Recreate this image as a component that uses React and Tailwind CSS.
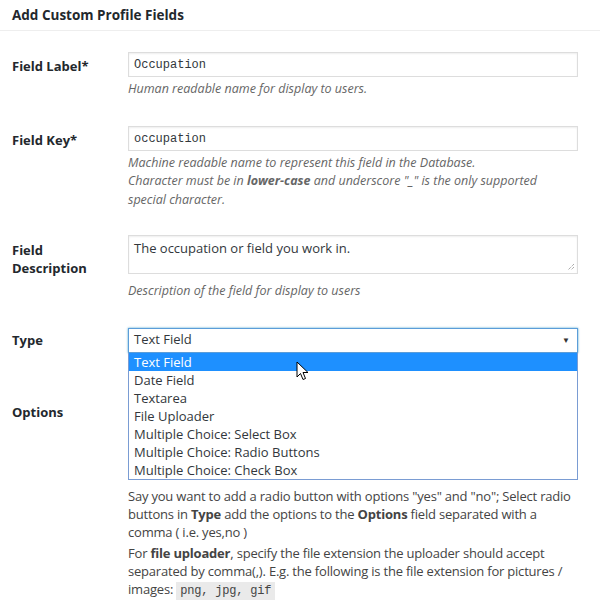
import React from "react";

const sans = { fontFamily: '"Open Sans", "Noto Sans", sans-serif' };
const mono = { fontFamily: '"Liberation Mono", monospace' };

const options = [
  "Text Field",
  "Date Field",
  "Textarea",
  "File Uploader",
  "Multiple Choice: Select Box",
  "Multiple Choice: Radio Buttons",
  "Multiple Choice: Check Box",
];

const Row = ({ label, labelPad = "pt-[5px]", children, className = "" }) => (
  <div className={`flex ${className}`}>
    <div className={`w-[116px] shrink-0 pr-2 text-[13px] font-bold leading-[18px] text-[#23282d] ${labelPad}`}>{label}</div>
    <div className="w-[450px]">{children}</div>
  </div>
);

const Help = ({ children, className = "mt-[3px]" }) => (
  <p className={`${className} text-[12.5px] italic leading-[18.5px] text-[#666]`}>{children}</p>
);

const TextInput = ({ value }) => (
  <div className="flex h-[25px] items-center border border-[#ddd] px-[5px] pt-[1px] text-[12px] text-[#32373c] shadow-[inset_0_1px_2px_rgba(0,0,0,0.07)]" style={mono}>
    {value}
  </div>
);

const Cursor = () => (
  <svg width="14" height="20" viewBox="0 0 14 20" className="absolute left-[296px] top-[361px] z-20">
    <path d="M1 1 L1 16 L4.5 12.5 L7 18.5 L9.5 17.5 L7 11.5 L12 11.5 Z" fill="#fff" stroke="#000" strokeWidth="1" strokeLinejoin="round" />
  </svg>
);

export default function App() {
  return (
    <div className="relative h-[610px] w-[600px] overflow-hidden bg-white" style={sans}>
      <div className="border-b border-[#eee] px-3 pb-[6px] pt-[6px] text-[13.5px] font-bold leading-[18px] text-[#23282d]">
        Add Custom Profile Fields
      </div>

      <div className="pl-3 pt-[21px]">
        <Row label="Field Label*">
          <TextInput value="Occupation" />
          <Help>Human readable name for display to users.</Help>
        </Row>

        <Row label="Field Key*" className="mt-[27px]">
          <TextInput value="occupation" />
          <Help>
            Machine readable name to represent this field in the Database.
            <br />
            Character must be in <b className="font-bold">lower-case</b> and underscore "_" is the only supported special character.
          </Help>
        </Row>

        <Row label={<>Field<br />Description</>} labelPad="pt-[6px]" className="mt-[26px]">
          <div className="relative h-[39px] border border-[#ddd] px-[5px] pt-[3px] text-[13px] leading-[18px] text-[#32373c] shadow-[inset_0_1px_2px_rgba(0,0,0,0.07)]">
            The occupation or field you work in.
            <svg width="8" height="8" viewBox="0 0 8 8" className="absolute bottom-[2px] right-[2px]">
              <path d="M7 1 L1 7 M7 4 L4 7" stroke="#888" strokeWidth="1" strokeDasharray="1 1" />
            </svg>
          </div>
          <Help className="mt-[8px]">Description of the field for display to users</Help>
        </Row>

        <Row label="Type" labelPad="pt-[3px]" className="mt-[27px]">
          <div className="relative">
            <div className="flex h-[25px] items-center justify-between border border-[#5b9dd9] px-[5px] text-[13px] text-[#32373c] shadow-[0_0_2px_rgba(30,140,190,0.8)]">
              <span>Text Field</span>
              <span className="mr-[2px] text-[8px] text-[#333]">▼</span>
            </div>
            <div className="absolute left-0 right-0 top-[25px] z-10 border border-t-0 border-[#7a9cd3] bg-white text-[13px] leading-[18px] text-[#32373c]">
              {options.map((o, i) => (
                <div key={o} className={`px-[5px] ${i === 0 ? "bg-[#1e90ff] text-white" : ""}`}>{o}</div>
              ))}
            </div>
          </div>
        </Row>

        <Row label="Options" labelPad="pt-0" className="mt-[50px]">
          <div className="h-[84px] overflow-hidden">
            <div className="h-[25px] border border-[#ddd]" />
            <p className="text-[12.5px] italic leading-[17px] text-[#666]">
              Comma separated values for select, radio and check box
              <br />
              types of field. The values go in the order given.
              <br />
              | options ,| yes, | no
            </p>
          </div>
        </Row>

        <div className="ml-[116px] w-[450px] text-[13px] leading-[18px] tracking-[-0.2px] text-[#444]">
          <p>
            Say you want to add a radio button with options "yes" and "no"; Select radio buttons in <b>Type</b> add the options to the <b>Options</b> field separated with a comma ( i.e. yes,no )
          </p>
          <p className="mt-[3px]">
            For <b>file uploader</b>, specify the file extension the uploader should accept separated by comma(,). E.g. the following is the file extension for pictures / images:{" "}
            <code className="bg-[#eaeaea] px-[4px] py-[2px] text-[12px] tracking-[-0.2px]" style={mono}>png, jpg, gif</code>
          </p>
        </div>
      </div>
      <Cursor />
    </div>
  );
}
